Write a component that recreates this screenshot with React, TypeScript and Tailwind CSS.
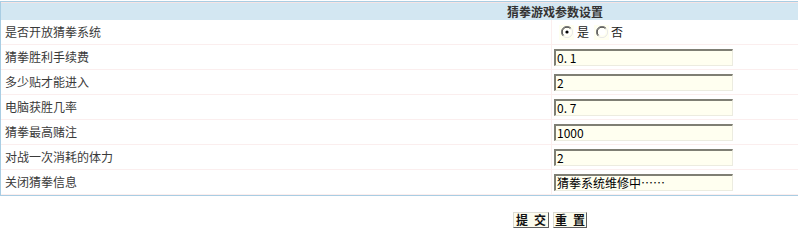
import React from "react";

const font = { fontFamily: '"Noto Sans CJK SC", "Noto Sans", sans-serif' };

function Radio({ checked }: { checked: boolean }) {
  return (
    <span className="inline-flex w-[15px] h-[15px] items-center justify-center bg-[#fffff0]">
      <svg width="12" height="12" viewBox="0 0 12 12">
        <path d="M2 10 A5 5 0 0 1 10 2" fill="none" stroke="#808080" strokeWidth="1" />
        <path d="M2.6 9.4 A4.2 4.2 0 0 1 9.4 2.6" fill="none" stroke="#404040" strokeWidth="1" />
        <path d="M10 2 A5 5 0 0 1 2 10" fill="none" stroke="#e8e8e8" strokeWidth="1" />
        <circle cx="6" cy="6" r="3.6" fill="#ffffff" />
        {checked && <circle cx="6" cy="6" r="1.6" fill="#000" />}
      </svg>
    </span>
  );
}

function TextInput({ value }: { value: string }) {
  return (
    <div className="w-[179px] h-[17px] bg-[#fffff0] border-t-2 border-l-2 border-t-[#7f7f74] border-l-[#7f7f74] border-b border-r border-b-[#ecece0] border-r-[#ecece0] flex items-center pl-[1px] text-[12px] leading-none text-black whitespace-pre">
      {value}
    </div>
  );
}

const rows: { label: string; value?: string }[] = [
  { label: "是否开放猜拳系统" },
  { label: "猜拳胜利手续费", value: "0. 1" },
  { label: "多少贴才能进入", value: "2" },
  { label: "电脑获胜几率", value: "0. 7" },
  { label: "猜拳最高赌注", value: "1000" },
  { label: "对战一次消耗的体力", value: "2" },
  { label: "关闭猜拳信息", value: "猜拳系统维修中……" },
];

const btn =
  "h-[16px] bg-[#fcfcee] border border-t-[#dcdcd4] border-l-[#dcdcd4] border-b-[#5f5f5f] border-r-[#5f5f5f] text-[12px] font-bold leading-none text-[#111] flex items-center justify-center gap-[6px]";

export default function App() {
  return (
    <div className="w-[798px] h-[250px] bg-white overflow-hidden pt-[1px]" style={font}>
      <div className="w-[800px] border-t border-l border-b border-[#a9cde3]">
        <div className="border-t border-[#f6e4e4] h-[18px] bg-[#d3e7f2] flex items-center">
          <div className="w-[506px]" />
          <div className="text-[12px] font-bold text-[#333] leading-none">猜拳游戏参数设置</div>
        </div>
        {rows.map((r, i) => (
          <div key={i} className="flex h-[25px] border-b border-[#fbeeee]">
            <div className="w-[551px] border-r border-[#fbeeee] flex items-center pl-[4px] text-[12px] text-[#3a3a3a] leading-none">
              {r.label}
            </div>
            <div className="flex-1 flex items-center pl-[2px]">
              {r.value === undefined ? (
                <div className="flex items-center pl-[5px] text-[12px] text-[#222] leading-none">
                  <Radio checked={true} />
                  <span className="ml-[3px]">是</span>
                  <span className="ml-[5px]">
                    <Radio checked={false} />
                  </span>
                  <span className="ml-[2px]">否</span>
                </div>
              ) : (
                <TextInput value={r.value} />
              )}
            </div>
          </div>
        ))}
      </div>
      <div className="flex mt-[16px] pl-[513px] gap-[4px]">
        <button className={`${btn} w-[36px]`}>
          <span>提</span>
          <span>交</span>
        </button>
        <button className={`${btn} w-[34px]`}>
          <span>重</span>
          <span>置</span>
        </button>
      </div>
    </div>
  );
}
